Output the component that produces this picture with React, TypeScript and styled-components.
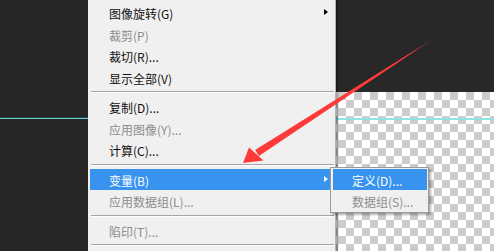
import styled, { createGlobalStyle } from "styled-components";

const GlobalStyle = createGlobalStyle`
  html, body {
    margin: 0;
    padding: 0;
    background: #272727;
  }
`;

type Item = { label: string; disabled?: boolean; sub?: boolean; active?: boolean } | "sep";

const menuItems: Item[] = [
  { label: "图像旋转(G)", sub: true },
  { label: "裁剪(P)", disabled: true },
  { label: "裁切(R)..." },
  { label: "显示全部(V)" },
  "sep",
  { label: "复制(D)..." },
  { label: "应用图像(Y)...", disabled: true },
  { label: "计算(C)..." },
  "sep",
  { label: "变量(B)", sub: true, active: true },
  { label: "应用数据组(L)...", disabled: true },
  "sep",
  { label: "陷印(T)...", disabled: true },
  "sep",
];

const subItems = [
  { label: "定义(D)...", active: true },
  { label: "数据组(S)...", disabled: true },
];

const Screen = styled.div`
  position: relative;
  width: 494px;
  height: 251px;
  overflow: hidden;
  display: flex;
  background: #272727;
  font-family: "Noto Sans CJK SC", "Noto Sans", sans-serif;
  font-size: 12px;
`;

const Workspace = styled.div`
  width: 88px;
  flex-shrink: 0;
  background: #262626;
`;

const Guide = styled.div<{ $top: number }>`
  margin-top: ${(p) => p.$top}px;
  height: 1px;
  background: #6fd0cf;
  box-shadow: 0 -1px 0 #1f4a4a;
`;

const Menu = styled.div`
  position: relative;
  z-index: 2;
  width: 244px;
  flex-shrink: 0;
  padding: 2px 1px 0 2px;
  background: #f0f0f0;
  border-right: 1px solid #b4b4b4;
  box-shadow: 2px 0 1px rgba(0, 0, 0, 0.35);
`;

const Row = styled.div<{ $disabled?: boolean; $active?: boolean }>`
  position: relative;
  height: 21.5px;
  line-height: 21.5px;
  padding: 1px 0 0 19px;
  box-sizing: border-box;
  white-space: nowrap;
  color: ${(p) => (p.$active ? "#ffffff" : p.$disabled ? "#8d8d8d" : "#111111")};
  background: ${(p) => (p.$active ? "#3793ee" : "transparent")};
`;

const SubArrow = styled.span<{ $active?: boolean }>`
  position: absolute;
  right: 6px;
  top: 7px;
  width: 0;
  height: 0;
  border-top: 3.5px solid transparent;
  border-bottom: 3.5px solid transparent;
  border-left: 4px solid ${(p) => (p.$active ? "#ffffff" : "#000000")};
`;

const Separator = styled.div`
  height: 8px;
  padding-top: 3px;
  box-sizing: border-box;
  margin-left: 1px;

  &::after {
    content: "";
    display: block;
    height: 1px;
    background: #a4a4a4;
    border-bottom: 1px solid #ffffff;
  }
`;

const Canvas = styled.div`
  flex: 1;
  display: flex;
  flex-direction: column;
`;

const Pasteboard = styled.div`
  height: 92px;
  background: #282828;
`;

const Checker = styled.div`
  flex: 1;
  background-image: repeating-conic-gradient(#ffffff 0 25%, #cccccc 0 50%);
  background-size: 16px 16px;
  background-position: 2px 0;
  overflow: hidden;
`;

const CanvasGuide = styled.div`
  margin-top: 26px;
  height: 2px;
  background: #8fe3e3;
`;

const SubMenu = styled.div`
  position: absolute;
  z-index: 3;
  left: 330px;
  top: 167px;
  width: 94px;
  padding: 1px 1px 1px 2px;
  background: #f0f0f0;
  border: 1px solid #9a9a9a;
  box-shadow: 2px 2px 2px rgba(0, 0, 0, 0.3);
`;

const SubRow = styled(Row)`
  height: 21px;
  line-height: 21px;
`;

const Pointer = styled.svg`
  position: absolute;
  z-index: 4;
  left: 0;
  top: 0;
  pointer-events: none;
`;

export default function App() {
  return (
    <>
      <GlobalStyle />
      <Screen>
        <Workspace>
          <Guide $top={118} />
        </Workspace>
        <Menu>
          {menuItems.map((item, i) =>
            item === "sep" ? (
              <Separator key={i} />
            ) : (
              <Row key={i} $disabled={item.disabled} $active={item.active}>
                {item.label}
                {item.sub && <SubArrow $active={item.active} />}
              </Row>
            )
          )}
        </Menu>
        <Canvas>
          <Pasteboard />
          <Checker>
            <CanvasGuide />
          </Checker>
        </Canvas>
        <SubMenu>
          {subItems.map((item, i) => (
            <SubRow key={i} $disabled={item.disabled} $active={item.active}>
              {item.label}
            </SubRow>
          ))}
        </SubMenu>
        <Pointer width="494" height="251" viewBox="0 0 494 251">
          <defs>
            <linearGradient id="shaft" x1="436" y1="37" x2="257" y2="153" gradientUnits="userSpaceOnUse">
              <stop offset="0" stopColor="#ff3a3a" stopOpacity="0.3" />
              <stop offset="0.15" stopColor="#ff3a3a" />
              <stop offset="1" stopColor="#ff3a3a" />
            </linearGradient>
          </defs>
          <polygon points="436,37 258.9,155.9 255.1,150.1" fill="url(#shaft)" />
          <polygon points="243,163 249,147.5 263.5,160.5" fill="#ff3a3a" />
        </Pointer>
      </Screen>
    </>
  );
}
